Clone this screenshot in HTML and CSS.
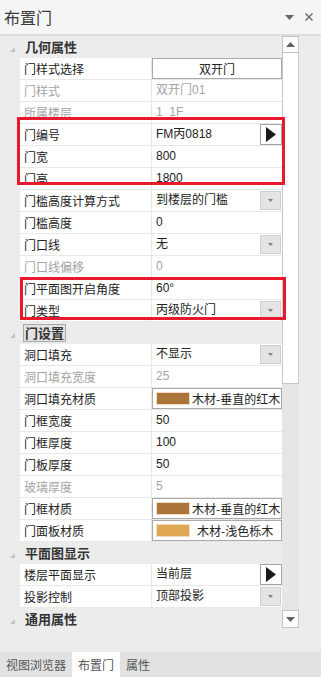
FILE: index.html
```html
<!DOCTYPE html>
<html lang="zh">
<head>
<meta charset="utf-8">
<link rel="stylesheet" href="styles.css">
</head>
<body>
<div class="panel">
  <div class="header">
    <span class="title">布置门</span>
    <span class="hicons">
      <svg width="9" height="5" viewBox="0 0 9 5"><path d="M0 0H9L4.5 5Z" fill="#666"/></svg>
      <svg width="8" height="8" viewBox="0 0 8 8"><path d="M0.5 0.5L7.5 7.5M7.5 0.5L0.5 7.5" stroke="#666" stroke-width="1.4"/></svg>
    </span>
  </div>
  <div class="main">
    <div class="list">
      <div class="cat"><svg class="tri" width="5" height="5" viewBox="0 0 5 5"><path d="M5 0V5H0Z" fill="#c2c2c2"/></svg><span class="cat-label">几何属性</span></div>
      <div class="row"><div class="name">门样式选择</div><div class="val btn-cell">双开门</div></div>
      <div class="row"><div class="name dis">门样式</div><div class="val dis">双开门01</div></div>
      <div class="row"><div class="name dis">所属楼层</div><div class="val dis">1_1F</div></div>
      <div class="row"><div class="name">门编号</div><div class="val"><span class="txt">FM丙0818</span><span class="arrow-btn"><svg width="10" height="15" viewBox="0 0 10 15"><path d="M0 0L10 7.5L0 15Z" fill="#1a1a1a"/></svg></span></div></div>
      <div class="row"><div class="name">门宽</div><div class="val">800</div></div>
      <div class="row"><div class="name">门高</div><div class="val">1800</div></div>
      <div class="row"><div class="name">门槛高度计算方式</div><div class="val"><span class="txt">到楼层的门槛</span><span class="dd"><svg width="5" height="3" viewBox="0 0 5 3"><path d="M0 0H5L2.5 3Z" fill="#808080"/></svg></span></div></div>
      <div class="row"><div class="name">门槛高度</div><div class="val">0</div></div>
      <div class="row"><div class="name">门口线</div><div class="val"><span class="txt">无</span><span class="dd"><svg width="5" height="3" viewBox="0 0 5 3"><path d="M0 0H5L2.5 3Z" fill="#808080"/></svg></span></div></div>
      <div class="row"><div class="name dis">门口线偏移</div><div class="val dis">0</div></div>
      <div class="row"><div class="name">门平面图开启角度</div><div class="val">60°</div></div>
      <div class="row"><div class="name">门类型</div><div class="val"><span class="txt">丙级防火门</span><span class="dd"><svg width="5" height="3" viewBox="0 0 5 3"><path d="M0 0H5L2.5 3Z" fill="#808080"/></svg></span></div></div>

      <div class="cat"><svg class="tri" width="5" height="5" viewBox="0 0 5 5"><path d="M5 0V5H0Z" fill="#c2c2c2"/></svg><span class="cat-label focus">门设置</span></div>
      <div class="row"><div class="name">洞口填充</div><div class="val"><span class="txt">不显示</span><span class="dd"><svg width="5" height="3" viewBox="0 0 5 3"><path d="M0 0H5L2.5 3Z" fill="#808080"/></svg></span></div></div>
      <div class="row"><div class="name dis">洞口填充宽度</div><div class="val dis">25</div></div>
      <div class="row"><div class="name">洞口填充材质</div><div class="val mat-cell"><span class="swatch red"></span><span class="mat">木材-垂直的红木</span></div></div>
      <div class="row"><div class="name">门框宽度</div><div class="val">50</div></div>
      <div class="row"><div class="name">门框厚度</div><div class="val">100</div></div>
      <div class="row"><div class="name">门板厚度</div><div class="val">50</div></div>
      <div class="row"><div class="name dis">玻璃厚度</div><div class="val dis">5</div></div>
      <div class="row"><div class="name">门框材质</div><div class="val mat-cell"><span class="swatch red"></span><span class="mat">木材-垂直的红木</span></div></div>
      <div class="row"><div class="name">门面板材质</div><div class="val mat-cell"><span class="swatch oak"></span><span class="mat wide">木材-浅色栎木</span></div></div>

      <div class="cat"><svg class="tri" width="5" height="5" viewBox="0 0 5 5"><path d="M5 0V5H0Z" fill="#c2c2c2"/></svg><span class="cat-label">平面图显示</span></div>
      <div class="row"><div class="name">楼层平面显示</div><div class="val"><span class="txt">当前层</span><span class="arrow-btn"><svg width="10" height="15" viewBox="0 0 10 15"><path d="M0 0L10 7.5L0 15Z" fill="#1a1a1a"/></svg></span></div></div>
      <div class="row"><div class="name">投影控制</div><div class="val"><span class="txt">顶部投影</span><span class="dd"><svg width="5" height="3" viewBox="0 0 5 3"><path d="M0 0H5L2.5 3Z" fill="#808080"/></svg></span></div></div>

      <div class="cat"><svg class="tri" width="5" height="5" viewBox="0 0 5 5"><path d="M5 0V5H0Z" fill="#c2c2c2"/></svg><span class="cat-label">通用属性</span></div>

      <div class="redbox box1"></div>
      <div class="redbox box2"></div>
    </div>
    <div class="scroll">
      <div class="sb-btn"><svg width="9" height="5" viewBox="0 0 9 5"><path d="M0 5H9L4.5 0Z" fill="#606060"/></svg></div>
      <div class="sb-thumb"></div>
      <div class="sb-track"></div>
      <div class="sb-btn down"><svg width="9" height="5" viewBox="0 0 9 5"><path d="M0 0H9L4.5 5Z" fill="#606060"/></svg></div>
    </div>
    <div class="rest"></div>
  </div>
  <div class="tabs">
    <span class="tab">视图浏览器</span>
    <span class="tab active">布置门</span>
    <span class="tab">属性</span>
  </div>
</div>
</body>
</html>
```

FILE: styles.css
```css
body {
  margin: 0;
  width: 321px;
  height: 677px;
  overflow: hidden;
  background: #ececec;
  font-family: "Noto Sans CJK SC", sans-serif;
  color: #222;
}
.panel {
  display: flex;
  flex-direction: column;
  height: 677px;
}
.header {
  height: 34px;
  border-bottom: 2px solid #dedede;
  background: #f5f5f5;
  display: flex;
  align-items: center;
  padding: 0 8px 0 4px;
}
.title {
  flex: 1;
  font-size: 16px;
  color: #3a3a3a;
  line-height: 20px;
}
.hicons {
  display: flex;
  align-items: center;
  gap: 11px;
}
.main {
  display: flex;
  height: 616px;
}
.list {
  width: 282px;
  position: relative;
}
.cat {
  height: 22px;
  display: flex;
  align-items: center;
  padding-left: 10px;
}
.tri {
  margin-top: 4px;
  margin-right: 8px;
}
.cat-label {
  font-size: 13px;
  font-weight: bold;
  color: #333;
  line-height: 16px;
  padding: 0 1px;
  border: 1px solid transparent;
}
.cat-label.focus {
  border-color: #a8a8a8;
  background: #e2e2e2;
}
.row {
  margin-left: 20px;
  height: 22px;
  box-sizing: border-box;
  padding-bottom: 1px;
  display: grid;
  grid-template-columns: 131px 130px;
  column-gap: 1px;
  background: #e8e8e8;
}
.name, .val {
  background: #fff;
  font-size: 12px;
  line-height: 21px;
  height: 21px;
  padding-left: 4px;
  white-space: nowrap;
  overflow: hidden;
}
.val {
  font-family: "Liberation Sans", "Noto Sans CJK SC", sans-serif;
  display: flex;
  align-items: center;
  box-sizing: border-box;
}
.dis {
  color: #a3a3a3;
}
.txt {
  flex: 1;
}
.btn-cell {
  border: 1px solid #a9a9a9;
  justify-content: center;
  padding-left: 0;
  font-family: "Noto Sans CJK SC", sans-serif;
}
.arrow-btn {
  width: 22px;
  height: 21px;
  box-sizing: border-box;
  border: 1px solid #a4a4a4;
  background: #fff;
  display: flex;
  align-items: center;
  justify-content: center;
}
.dd {
  width: 21px;
  height: 19px;
  margin-right: 1px;
  box-sizing: border-box;
  border: 1px solid #cfcfcf;
  background: #e4e4e4;
  display: flex;
  align-items: center;
  justify-content: center;
}
.mat-cell {
  border: 1px solid #a9a9a9;
  padding-left: 3px;
}
.swatch {
  flex: none;
  width: 34px;
  height: 13px;
  box-sizing: border-box;
  border: 1px solid #f2dcc4;
}
.swatch.red {
  background: #a97539;
}
.swatch.oak {
  background: #e0a852;
}
.mat {
  margin-left: 2px;
  font-family: "Noto Sans CJK SC", sans-serif;
}
.mat.wide {
  margin-left: 7px;
}
.redbox {
  position: absolute;
  border: 3px solid #e8192c;
  box-sizing: border-box;
}
.box1 {
  left: 17px;
  top: 81px;
  width: 268px;
  height: 68px;
}
.box2 {
  left: 20px;
  top: 241px;
  width: 266px;
  height: 43px;
}
.scroll {
  width: 17px;
  display: flex;
  flex-direction: column;
}
.sb-btn {
  height: 17px;
  box-sizing: border-box;
  border: 1px solid #c4c4c4;
  background: #fbfbfb;
  display: flex;
  align-items: center;
  justify-content: center;
}
.sb-btn.down {
  height: 18px;
}
.sb-thumb {
  height: 331px;
  box-sizing: border-box;
  border-left: 1px solid #c8c8c8;
  border-right: 1px solid #c8c8c8;
  border-bottom: 1px solid #c8c8c8;
  background: #fff;
}
.sb-track {
  height: 226px;
  background: #e6e6e6;
}
.rest {
  flex: 1;
}
.tabs {
  height: 25px;
  background: #e2e2e2;
  display: flex;
}
.tab {
  padding: 0 6px;
  font-size: 12px;
  line-height: 25px;
  color: #555;
}
.tab.active {
  background: #fff;
}
```
